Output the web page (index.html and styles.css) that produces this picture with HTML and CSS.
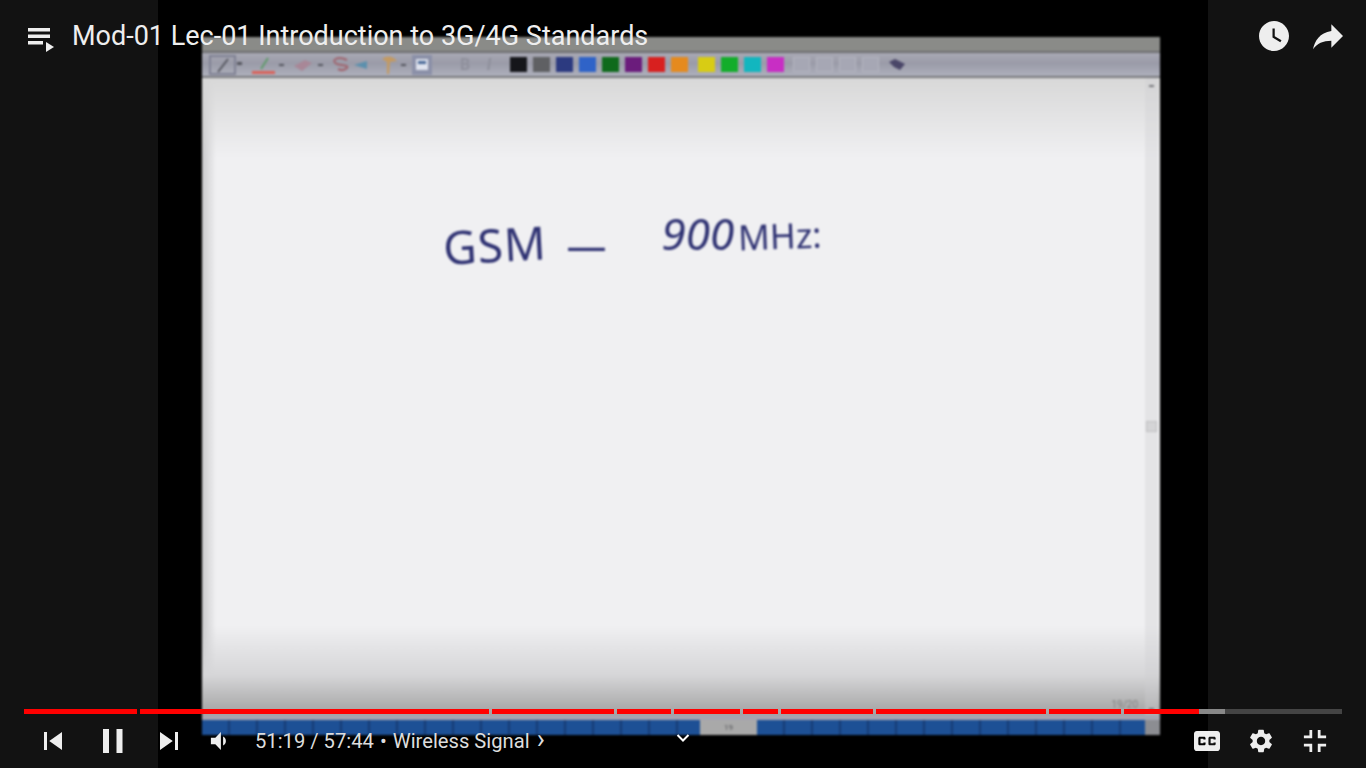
FILE: index.html
```html
<!DOCTYPE html>
<html lang="en">
<head>
    <meta charset="UTF-8">
    <meta name="viewport" content="width=device-width, initial-scale=1.0">
    <title>Mod-01 Lec-01 Introduction to 3G/4G Standards</title>
    <link rel="stylesheet" href="styles.css">
</head>
<body>
    <div class="player">
        <div class="video">
            <div class="slide">
                <div class="slide-title"></div>
                <div class="slide-tools">
                    <div class="tool-box">
                        <svg width="36" height="22" viewBox="0 0 36 22"><rect x="1" y="2" width="25" height="18" fill="none" stroke="#7f8193" stroke-width="2"/><path d="M9 18 19 5" stroke="#55565f" stroke-width="2"/><rect x="28" y="8" width="5" height="3" fill="#55565f"/></svg>
                    </div>
                    <svg class="tool" width="26" height="22" viewBox="0 0 26 22"><path d="M10 15 17 4" stroke="#5f9a6a" stroke-width="2"/><rect x="1" y="17" width="23" height="3" fill="#d9625a"/></svg>
                    <span class="tool-drop"></span>
                    <svg class="tool" width="26" height="22" viewBox="0 0 26 22"><path d="M4 12 15 6 22 9 12 17Z" fill="#a88797"/></svg>
                    <span class="tool-drop"></span>
                    <svg class="tool" width="24" height="22" viewBox="0 0 24 22"><path d="M18 6C8 1 1 7 8 10c6 2 12 1 10 4-3 3-7 2-9 1" fill="none" stroke="#a0646e" stroke-width="2"/></svg>
                    <svg class="tool" width="16" height="22" viewBox="0 0 16 22"><path d="M1 11 14 7V15Z" fill="#5c90ad"/></svg>
                    <svg class="tool tool-wide" width="20" height="22" viewBox="0 0 20 22"><path d="M3 5C8 1 14 2 18 7L11 8 10 20H8L8 8Z" fill="#c39a63"/></svg>
                    <span class="tool-drop"></span>
                    <svg class="tool" width="20" height="22" viewBox="0 0 20 22"><rect x="0" y="1" width="20" height="20" fill="#8b90a8"/><rect x="4" y="5" width="12" height="11" fill="#dfe3ee"/><rect x="6" y="7" width="8" height="3" fill="#4a6a98"/></svg>
                    <span class="tool-ghost">B</span>
                    <span class="tool-ghost tool-ghost-i">I</span>
                    <div class="swatches">
                        <span class="swatch sw-black"></span>
                        <span class="swatch sw-gray"></span>
                        <span class="swatch sw-navy"></span>
                        <span class="swatch sw-blue"></span>
                        <span class="swatch sw-green"></span>
                        <span class="swatch sw-purple"></span>
                        <span class="swatch sw-red"></span>
                        <span class="swatch sw-orange"></span>
                        <span class="swatch sw-yellow"></span>
                        <span class="swatch sw-lime"></span>
                        <span class="swatch sw-teal"></span>
                        <span class="swatch sw-magenta"></span>
                    </div>
                    <div class="empties">
                        <span class="empty"></span>
                        <span class="empty"></span>
                        <span class="empty"></span>
                        <span class="empty"></span>
                    </div>
                    <svg class="hat" width="18" height="14" viewBox="0 0 18 14"><path d="M1 4 7 1 17 6 12 12 6 9Z" fill="#4a4668"/></svg>
                </div>
                <div class="slide-page">
                    <div class="writing">
                        <span class="hand hand-gsm">GSM</span>
                        <span class="hand hand-dash">—</span>
                        <span class="hand hand-num">900</span>
                        <span class="hand hand-mhz">MHz:</span>
                    </div>
                    <div class="scrollbar">
                        <span class="scroll-arrow"></span>
                        <span class="scroll-thumb"></span>
                        <span class="scroll-arrow"></span>
                    </div>
                    <span class="page-no">19/20</span>
                </div>
                <div class="slide-tasks">
                    <div class="task task-left"></div>
                    <div class="task-tab">19</div>
                    <div class="task task-right"></div>
                    <div class="task-end"></div>
                </div>
            </div>
        </div>

        <div class="topbar">
            <svg class="playlist-icon" width="32" height="30" viewBox="0 0 32 30"><path d="M0 2H22V5.500H0ZM0 8.500H22V12H0ZM0 15H15V18.500H0Z" fill="#eee"/><path d="M18 16 26 21 18 26Z" fill="#eee"/></svg>
            <div class="video-title">Mod-01 Lec-01 Introduction to 3G/4G Standards</div>
            <svg class="clock-icon" width="36" height="36" viewBox="0 0 24 24"><path d="M12 2C6.5 2 2 6.5 2 12s4.5 10 10 10 10-4.5 10-10S17.5 2 12 2zm4.2 14.2L11 13V7h1.5v5.2l4.5 2.7-.8 1.3z" fill="#eee"/></svg>
            <svg class="share-icon" width="40" height="40" viewBox="0 0 24 24"><path d="M14 9V5l7 7-7 7v-4.1c-5 0-8.5 1.6-11 5.1 1-5 4-10 11-11z" fill="#eee"/></svg>
        </div>

        <div class="bottombar">
            <div class="progress">
                <span class="seg" style="width:113px"></span>
                <span class="seg" style="width:349px"></span>
                <span class="seg" style="width:122px"></span>
                <span class="seg" style="width:54px"></span>
                <span class="seg" style="width:66px"></span>
                <span class="seg" style="width:35px"></span>
                <span class="seg" style="width:92px"></span>
                <span class="seg" style="width:170px"></span>
                <span class="seg" style="width:72px"></span>
                <span class="seg seg-last" style="width:218px">
                    <span class="seg-played" style="width:75px"></span>
                    <span class="seg-buffer" style="width:26px"></span>
                </span>
            </div>
            <div class="controls">
                <svg class="ctl ctl-prev" width="54" height="54" viewBox="0 0 36 36"><path d="M12 12h2v12h-2zm3.5 6 8.5 6V12z"/></svg>
                <svg class="ctl ctl-pause" width="54" height="54" viewBox="0 0 36 36"><path d="M12 26h4V10h-4zM21 26h4V10h-4z"/></svg>
                <svg class="ctl ctl-next" width="54" height="54" viewBox="0 0 36 36"><path d="M12 24l8.500-6L12 12zM22 12v12h2V12z"/></svg>
                <svg class="ctl ctl-vol" width="40" height="40" viewBox="0 0 36 36"><path d="M8 21h4l5 5V10l-5 5H8zM19 14v8c1.480-.68 2.500-2.230 2.500-4 0-1.740-1.020-3.260-2.500-4z"/></svg>
                <div class="time">51:19 / 57:44 <span class="dot">•</span> Wireless Signal <span class="chapter-arrow">›</span></div>
                <svg class="ctl ctl-cc" width="52" height="52" viewBox="0 0 36 36"><path fill-rule="evenodd" d="M11 11c-1.110 0-2 .9-2 2v10c0 1.100.89 2 2 2h14c1.100 0 2-.9 2-2V13c0-1.100-.9-2-2-2zm6 6h-1.500v-.5h-2v3h2V19H17v1c0 .55-.45 1-1 1h-3c-.55 0-1-.45-1-1v-4c0-.55.45-1 1-1h3c.55 0 1 .45 1 1zm7 0h-1.500v-.5h-2v3h2V19H24v1c0 .55-.45 1-1 1h-3c-.55 0-1-.45-1-1v-4c0-.55.45-1 1-1h3c.55 0 1 .45 1 1z"/></svg>
                <svg class="ctl ctl-gear" width="28" height="28" viewBox="0 0 24 24"><path d="M19.14 12.94c.04-.3.06-.61.06-.94 0-.32-.02-.64-.07-.94l2.03-1.58c.18-.14.23-.41.12-.61l-1.92-3.32c-.12-.22-.37-.29-.59-.22l-2.39.96c-.5-.38-1.03-.7-1.62-.94l-.36-2.54c-.04-.24-.24-.41-.48-.41h-3.84c-.24 0-.43.17-.47.41l-.36 2.54c-.59.24-1.13.57-1.62.94l-2.39-.96c-.22-.08-.47 0-.59.22L2.74 8.87c-.12.21-.08.47.12.61l2.03 1.58c-.05.3-.09.63-.09.94s.02.64.07.94l-2.03 1.58c-.18.14-.23.41-.12.61l1.92 3.32c.12.22.37.29.59.22l2.39-.96c.5.38 1.03.7 1.62.94l.36 2.54c.05.24.24.41.48.41h3.84c.24 0 .44-.17.47-.41l.36-2.54c.59-.24 1.13-.56 1.62-.94l2.39.96c.22.08.47 0 .59-.22l1.92-3.32c.12-.22.07-.47-.12-.61l-2.01-1.58zM12 15.6c-1.98 0-3.6-1.62-3.6-3.6s1.62-3.6 3.6-3.6 3.6 1.62 3.6 3.6-1.62 3.6-3.6 3.6z"/></svg>
                <svg class="ctl ctl-full" width="50" height="50" viewBox="0 0 36 36"><path d="M14 14h-4v2h6v-6h-2zM22 14v-4h-2v6h6v-2zM20 26h2v-4h4v-2h-6zM10 22h4v4h2v-6h-6z"/></svg>
            </div>
            <svg class="more-chevron" width="14" height="10" viewBox="0 0 14 10"><path d="M1.500 2 7 7.500 12.500 2" fill="none" stroke="#fff" stroke-width="2"/></svg>
        </div>
    </div>
</body>
</html>
```

FILE: styles.css
```css
body{
    margin: 0;
    background: #121212;
    font-family: Roboto, "Liberation Sans", sans-serif;
    overflow: hidden;
}
.player{
    position: relative;
    width: 1366px;
    height: 768px;
    display: flex;
    justify-content: center;
    overflow: hidden;
}

/* the video picture */
.video{
    width: 1050px;
    height: 768px;
    box-sizing: border-box;
    padding: 37px 48px 33px 44px;
    background: #000;
    display: flex;
    overflow: hidden;
}
.slide{
    flex: 1;
    display: flex;
    flex-direction: column;
    filter: blur(1px);
}
.slide-title{
    height: 14px;
    background: #8a8b88;
    border-bottom: 2px solid #6d6e70;
}
.slide-tools{
    height: 23px;
    display: flex;
    align-items: center;
    padding-left: 7px;
    background: linear-gradient(#a9a9b5, #9a9ba8 45%, #aeb0bc);
    border-bottom: 2px solid #77787c;
}
.tool-box{
    display: flex;
    margin-right: 6px;
}
.tool{
    flex: none;
}
.tool-wide{
    margin-left: 10px;
}
.tool-drop{
    width: 5px;
    height: 2px;
    margin: 0 6px 0 2px;
    background: #55565f;
}
.tool-ghost{
    width: 16px;
    margin-left: 25px;
    color: #8f909c;
    font-size: 16px;
    font-weight: 700;
    text-align: center;
}
.tool-ghost-i{
    margin-left: 8px;
    font-style: italic;
}
.swatches{
    display: flex;
    gap: 6px;
    margin-left: 13px;
}
.swatch{
    width: 17px;
    height: 15px;
}
.sw-black{background: #15161a;}
.sw-gray{background: #5f6063;}
.sw-navy{background: #2c3a80;}
.sw-blue{background: #2f63c8;}
.sw-green{background: #0f6a1c;}
.sw-purple{background: #6b1c7c;}
.sw-red{background: #d8201f;}
.sw-orange{background: #e58a1e; margin-right: 4px;}
.sw-yellow{background: #d8cc14;}
.sw-lime{background: #12ad2a;}
.sw-teal{background: #12b6bf;}
.sw-magenta{background: #c82ec4;}
.empties{
    display: flex;
    gap: 6px;
    margin-left: 9px;
}
.empty{
    width: 17px;
    height: 15px;
    background: #a6a7b4;
    box-shadow: inset 0 0 0 1px #b4b5c0;
}
.hat{
    margin-left: 9px;
}
.slide-page{
    position: relative;
    flex: 1;
    display: flex;
    justify-content: space-between;
    background:
        linear-gradient(#d8d8d8, rgba(238,238,241,0) 80px),
        linear-gradient(to top, #a2a2a2, #d6d6d8 40px, rgba(240,240,243,0) 90px),
        linear-gradient(to right, #c9c9cb, #f0f0f2 14px);
    background-color: #f0f0f3;
}
.writing{
    display: flex;
    align-items: center;
    height: 60px;
    padding: 136px 0 0 241px;
    color: #2e3172;
    font-family: "Noto Sans", sans-serif;
}
.hand{
    display: block;
}
.hand-gsm{
    font-size: 46px;
    letter-spacing: 1px;
    transform: rotate(-3deg);
}
.hand-dash{
    margin-left: 20px;
    font-size: 40px;
}
.hand-num{
    margin-left: 55px;
    font-size: 44px;
    font-style: italic;
    letter-spacing: 0;
    transform: translateY(-11px);
}
.hand-mhz{
    margin-left: 4px;
    font-size: 35px;
    letter-spacing: 0;
    transform: translateY(-9px) rotate(-2deg);
}
.scrollbar{
    width: 13px;
    margin-right: 2px;
    display: flex;
    flex-direction: column;
    align-items: center;
    justify-content: space-between;
    padding: 7px 0 5px;
    background: rgba(205,205,210,.35);
}
.scroll-arrow{
    width: 5px;
    height: 2px;
    background: #77787c;
}
.scroll-thumb{
    width: 11px;
    height: 11px;
    margin-top: 58px;
    background: #d4d4d6;
    box-shadow: inset 0 0 0 1px #c0c0c2;
}
.page-no{
    position: absolute;
    right: 22px;
    bottom: 5px;
    color: #808080;
    font-size: 10px;
}
.slide-tasks{
    height: 15px;
    display: flex;
    background: #8888a0;
    border-top: 5px solid #a5a4b0;
}
.task{
    background: repeating-linear-gradient(to right, #1d5095 0, #1d5095 26px, #163c74 26px, #163c74 28px);
}
.task-left{
    width: 498px;
}
.task-tab{
    width: 57px;
    background: #a9a9a9;
    color: #55565a;
    font-size: 8px;
    line-height: 15px;
    text-align: center;
}
.task-right{
    flex: 1;
}
.task-end{
    width: 15px;
    background: #8c8d92;
}

/* overlays */
.topbar{
    position: absolute;
    top: 0;
    left: 0;
    right: 0;
    height: 72px;
    box-sizing: border-box;
    padding: 0 18px 0 28px;
    display: flex;
    align-items: center;
}
.playlist-icon{
    margin-right: 12px;
    margin-top: 9px;
}
.video-title{
    flex: 1;
    color: #eee;
    font-size: 27px;
    line-height: 30px;
}
.clock-icon{
    margin-right: 16px;
}
.bottombar{
    position: absolute;
    left: 0;
    right: 0;
    bottom: 0;
}
.progress{
    height: 5px;
    display: flex;
    gap: 3px;
    padding: 0 24px;
}
.seg{
    display: block;
    flex: none;
    height: 5px;
    background: #f00;
}
.seg-last{
    display: flex;
    background: #444;
}
.seg-played{
    background: #f00;
}
.seg-buffer{
    background: #888;
}
.controls{
    height: 54px;
    display: flex;
    align-items: center;
    padding: 0 26px;
}
.ctl{
    flex: none;
    fill: #eee;
}
.ctl-pause{
    margin-left: 5px;
}
.ctl-next{
    margin-left: 3px;
}
.ctl-vol{
    margin-left: 6px;
}
.time{
    flex: 1;
    margin-left: 13px;
    color: #ddd;
    font-size: 20.2px;
    white-space: nowrap;
}
.dot{
    margin: 0 1px;
}
.chapter-arrow{
    margin-left: 2px;
    font-size: 27px;
    line-height: 20px;
}
.ctl-gear{
    margin-left: 14px;
}
.ctl-full{
    margin-left: 15px;
}
.more-chevron{
    position: absolute;
    left: 676px;
    top: 24px;
}
```
